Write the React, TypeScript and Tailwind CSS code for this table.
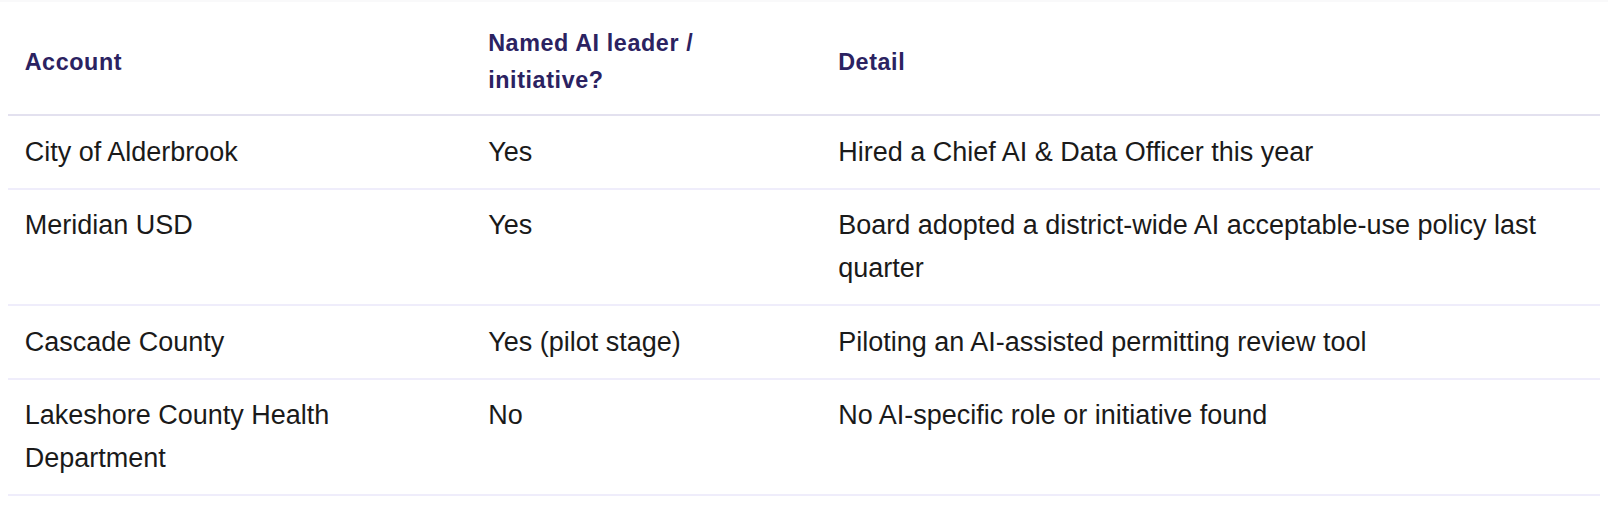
const ROWS = [
  {
    account: "City of Alderbrook",
    named: "Yes",
    detail: "Hired a Chief AI & Data Officer this year",
  },
  {
    account: "Meridian USD",
    named: "Yes",
    detail: "Board adopted a district-wide AI acceptable-use policy last quarter",
  },
  {
    account: "Cascade County",
    named: "Yes (pilot stage)",
    detail: "Piloting an AI-assisted permitting review tool",
  },
  {
    account: "Lakeshore County Health Department",
    named: "No",
    detail: "No AI-specific role or initiative found",
  },
];

const th =
  "border-b-2 border-[#e3e1ef] px-[16.67px] pt-[15px] pb-[14.33px] text-left align-middle text-[23.33px] font-bold leading-[1.6] tracking-[0.6px] text-[#2b2261]";
const td =
  "border-b-2 border-[#efedfb] px-[16.67px] pt-[14.67px] pb-[14.33px] text-left align-top text-[27px] leading-[42.67px] text-[#1a1a1a]";

export default function App() {
  return (
    <div
      className="h-[508px] w-[1608px] overflow-hidden bg-white"
      style={{ fontFamily: '"Liberation Sans", Arial, sans-serif' }}
    >
      <div className="h-[2px] bg-[#f9f9fa]" />
      <div className="px-2 pt-2">
        <table className="w-full table-fixed border-separate border-spacing-0">
          <colgroup>
            <col className="w-[463.5px]" />
            <col className="w-[350px]" />
            <col />
          </colgroup>
          <thead>
            <tr>
              <th className={th}>Account</th>
              <th className={th}>
                Named AI leader /<br />
                initiative?
              </th>
              <th className={th}>Detail</th>
            </tr>
          </thead>
          <tbody>
            {ROWS.map((row) => (
              <tr key={row.account}>
                <td className={td}>{row.account}</td>
                <td className={td}>{row.named}</td>
                <td className={td}>{row.detail}</td>
              </tr>
            ))}
          </tbody>
        </table>
      </div>
    </div>
  );
}
